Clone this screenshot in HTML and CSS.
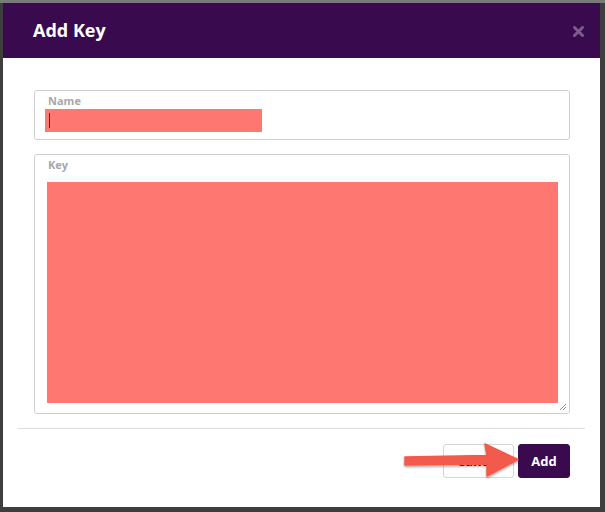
FILE: index.html
```
<!DOCTYPE html>
<html>
<head>
<meta charset="utf-8">
<link rel="stylesheet" href="styles.css">
</head>
<body>
<div class="frame">
  <div class="modal">
    <div class="modal-header">
      <h1 class="title">Add Key</h1>
      <svg class="close" width="11" height="11" viewBox="0 0 11 11"><path d="M1.5 1.5 L9.5 9.5 M9.5 1.5 L1.5 9.5" stroke="#7d5b8f" stroke-width="3" stroke-linecap="round"/></svg>
    </div>
    <div class="modal-body">
      <div class="field field-name">
        <label class="label">Name</label>
        <div class="input-hl"><span class="caret"></span></div>
      </div>
      <div class="field field-key">
        <label class="label">Key</label>
        <div class="textarea-hl"></div>
        <svg class="resize" width="8" height="8" viewBox="0 0 8 8"><path d="M7 1 L1 7 M7 4 L4 7" stroke="#888" stroke-width="1"/></svg>
      </div>
    </div>
    <div class="modal-footer">
      <button class="btn btn-cancel">Cancel</button>
      <button class="btn btn-add">Add</button>
      <svg class="arrow" width="122" height="40" viewBox="0 0 122 40">
        <defs>
          <filter id="sh" x="-10%" y="-20%" width="120%" height="150%">
            <feDropShadow dx="0" dy="1.5" stdDeviation="1.2" flood-color="#000" flood-opacity="0.35"/>
          </filter>
        </defs>
        <path d="M4 16 L86 14.5 L84 3 L117 18.5 L86 35 L86 23 L4 24 Z" fill="#f25a4b" stroke="#f25a4b" stroke-width="1.5" stroke-linejoin="round" filter="url(#sh)"/>
      </svg>
    </div>
  </div>
</div>
</body>
</html>
```
FILE: styles.css
```
html, body {
  margin: 0;
  padding: 0;
}
body {
  width: 605px;
  height: 512px;
  background: #4a4a4a;
  font-family: "Open Sans", "Liberation Sans", sans-serif;
  overflow: hidden;
}
.frame {
  width: 605px;
  height: 512px;
  box-sizing: border-box;
  padding: 3px 5px 5px 3px;
  background: linear-gradient(to bottom, #7a7a7a 0, #7a7a7a 3px, #3e3e3e 3px);
}
.modal {
  width: 597px;
  height: 504px;
  background: #fff;
  display: flex;
  flex-direction: column;
  position: relative;
}
.modal-header {
  height: 55px;
  background: #3a0a4f;
  display: flex;
  align-items: center;
  justify-content: space-between;
  padding: 0 16px 0 30px;
  flex-shrink: 0;
}
.title {
  margin: 0;
  color: #fff;
  font-size: 18px;
  font-weight: 700;
  letter-spacing: 0;
  line-height: 1;
  padding-bottom: 2px;
}
.close {
  display: block;
  margin-top: 1px;
}
.modal-body {
  padding: 32px 30px 0 31px;
  display: flex;
  flex-direction: column;
  gap: 14px;
}
.field {
  border: 1px solid #cfcfcf;
  border-radius: 3px;
  box-sizing: border-box;
  position: relative;
}
.label {
  display: block;
  color: #a8a8a8;
  font-size: 11px;
  font-weight: 700;
  line-height: 14px;
  margin-left: 13px;
}
.field-name {
  height: 50px;
  padding-top: 3px;
}
.input-hl {
  margin-left: 10px;
  margin-top: 1px;
  width: 217px;
  height: 23px;
  background: #fe7771;
  display: flex;
  align-items: center;
}
.caret {
  width: 1px;
  height: 15px;
  background: #5a2a2a;
  margin-left: 4px;
}
.field-key {
  height: 260px;
  padding-top: 3px;
}
.textarea-hl {
  margin: 10px 11px 0 12px;
  height: 221px;
  background: #fe7771;
}
.resize {
  position: absolute;
  right: 2px;
  bottom: 2px;
}
.modal-footer {
  margin: 14px 15px 0 15px;
  border-top: 1px solid #dcdcdc;
  padding: 15px 15px 0 0;
  display: flex;
  justify-content: flex-end;
  gap: 4px;
  position: relative;
}
.btn {
  height: 34px;
  border-radius: 3px;
  font-family: "Open Sans", "Liberation Sans", sans-serif;
  font-size: 13px;
  font-weight: 700;
  padding: 0;
  box-sizing: border-box;
}
.btn-cancel {
  width: 71px;
  background: #fff;
  border: 1px solid #d6d6d6;
  color: #333;
}
.btn-add {
  width: 52px;
  background: #3a0a4f;
  border: 1px solid #3a0a4f;
  color: #fff;
}
.arrow {
  position: absolute;
  left: 383px;
  top: 12px;
}
```
